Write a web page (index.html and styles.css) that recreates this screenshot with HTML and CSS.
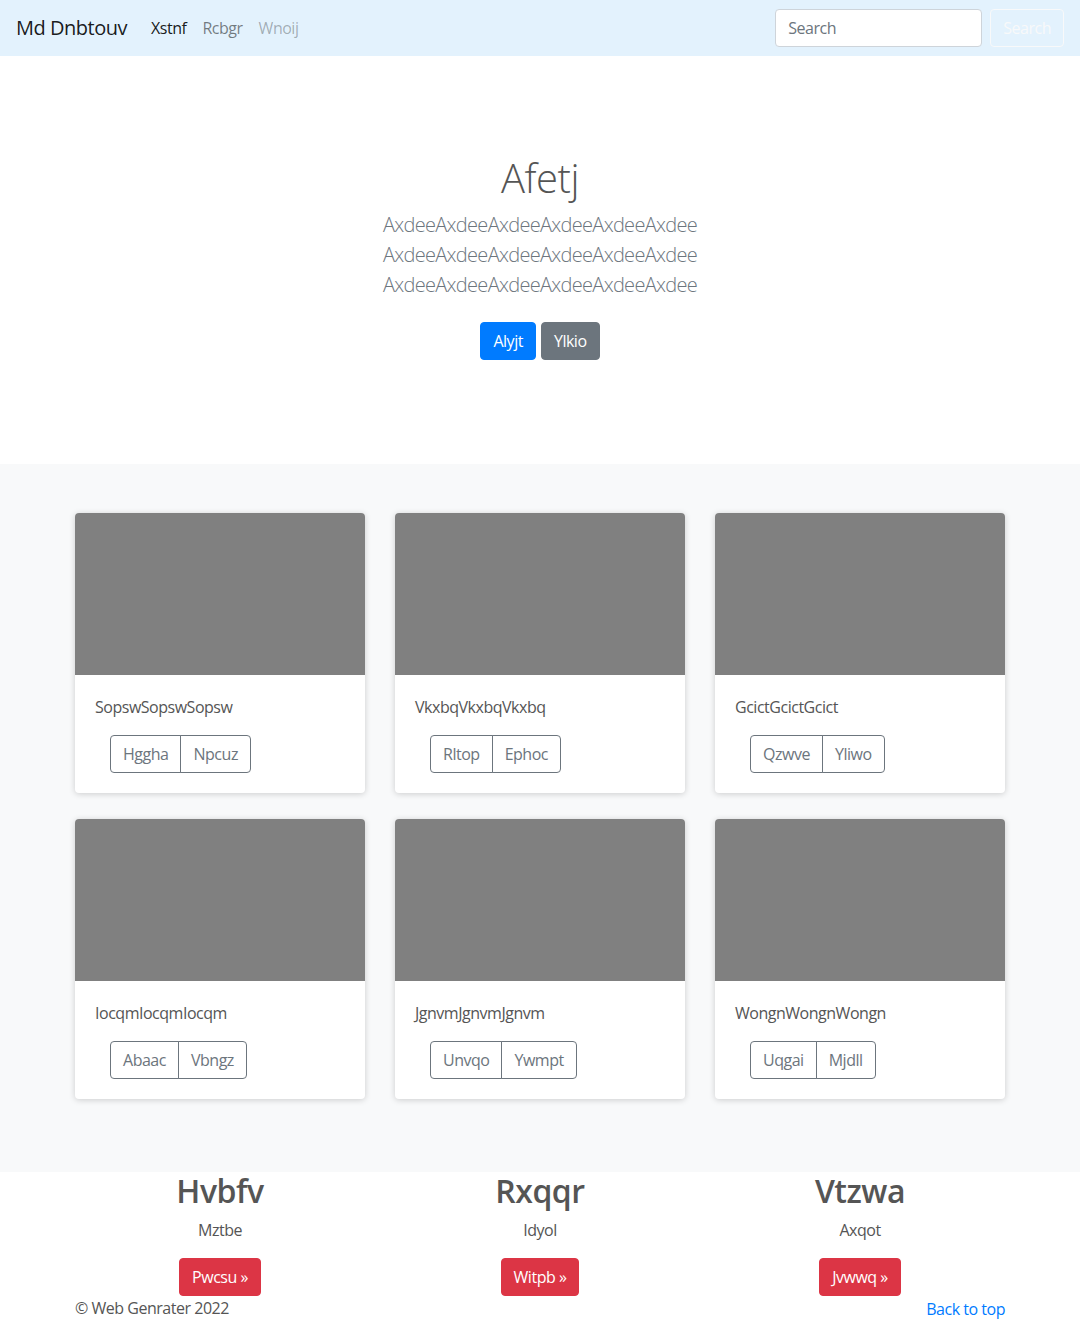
FILE: index.html
```html
<!DOCTYPE html>
<html lang="en">
<head>
<meta charset="utf-8">
<title>Md Dnbtouv</title>
<link rel="stylesheet" href="styles.css">
</head>
<body>
<nav class="navbar">
  <a class="brand" href="#">Md Dnbtouv</a>
  <ul class="nav-links">
    <li><a class="nav-link active" href="#">Xstnf</a></li>
    <li><a class="nav-link" href="#">Rcbgr</a></li>
    <li><a class="nav-link disabled" href="#">Wnoij</a></li>
  </ul>
  <form class="search">
    <input class="search-input" type="text" placeholder="Search">
    <button class="search-btn" type="button">Search</button>
  </form>
</nav>

<section class="hero">
  <div class="hero-inner">
    <h1 class="hero-title">Afetj</h1>
    <p class="lead">AxdeeAxdeeAxdeeAxdeeAxdeeAxdee AxdeeAxdeeAxdeeAxdeeAxdeeAxdee AxdeeAxdeeAxdeeAxdeeAxdeeAxdee</p>
    <p class="hero-actions">
      <a class="btn btn-primary" href="#">Alyjt</a>
      <a class="btn btn-secondary" href="#">Ylkio</a>
    </p>
  </div>
</section>

<section class="album">
  <div class="container">
    <div class="grid">
      <div class="card">
        <div class="thumb"></div>
        <div class="card-body">
          <p class="card-text">SopswSopswSopsw</p>
          <div class="btn-group"><button class="btn btn-outline">Hggha</button><button class="btn btn-outline">Npcuz</button></div>
        </div>
      </div>
      <div class="card">
        <div class="thumb"></div>
        <div class="card-body">
          <p class="card-text">VkxbqVkxbqVkxbq</p>
          <div class="btn-group"><button class="btn btn-outline">Rltop</button><button class="btn btn-outline">Ephoc</button></div>
        </div>
      </div>
      <div class="card">
        <div class="thumb"></div>
        <div class="card-body">
          <p class="card-text">GcictGcictGcict</p>
          <div class="btn-group"><button class="btn btn-outline">Qzwve</button><button class="btn btn-outline">Yliwo</button></div>
        </div>
      </div>
      <div class="card">
        <div class="thumb"></div>
        <div class="card-body">
          <p class="card-text">IocqmIocqmIocqm</p>
          <div class="btn-group"><button class="btn btn-outline">Abaac</button><button class="btn btn-outline">Vbngz</button></div>
        </div>
      </div>
      <div class="card">
        <div class="thumb"></div>
        <div class="card-body">
          <p class="card-text">JgnvmJgnvmJgnvm</p>
          <div class="btn-group"><button class="btn btn-outline">Unvqo</button><button class="btn btn-outline">Ywmpt</button></div>
        </div>
      </div>
      <div class="card">
        <div class="thumb"></div>
        <div class="card-body">
          <p class="card-text">WongnWongnWongn</p>
          <div class="btn-group"><button class="btn btn-outline">Uqgai</button><button class="btn btn-outline">Mjdll</button></div>
        </div>
      </div>
    </div>
  </div>
</section>

<section class="features">
  <div class="container features-row">
    <div class="feature">
      <h2 class="feature-title">Hvbfv</h2>
      <p class="feature-text">Mztbe</p>
      <a class="btn btn-danger" href="#">Pwcsu &raquo;</a>
    </div>
    <div class="feature">
      <h2 class="feature-title">Rxqqr</h2>
      <p class="feature-text">Idyol</p>
      <a class="btn btn-danger" href="#">Witpb &raquo;</a>
    </div>
    <div class="feature">
      <h2 class="feature-title">Vtzwa</h2>
      <p class="feature-text">Axqot</p>
      <a class="btn btn-danger" href="#">Jvwwq &raquo;</a>
    </div>
  </div>
</section>

<footer class="footer">
  <div class="container footer-row">
    <p class="copy">&copy; Web Genrater 2022</p>
    <a class="back" href="#">Back to top</a>
  </div>
</footer>
</body>
</html>
```

FILE: styles.css
```css
* { box-sizing: border-box; }
html, body { margin: 0; padding: 0; }
body {
  font-family: "Open Sans", "Noto Sans", "Liberation Sans", sans-serif;
  font-size: 16px;
  line-height: 1.5;
  letter-spacing: -0.03em;
  color: #555;
  background: #fff;
}
a { text-decoration: none; }
p { margin: 0; }

.navbar {
  height: 56px;
  background: #e3f2fd;
  display: flex;
  align-items: center;
  padding: 0 16px;
}
.brand {
  font-size: 20px;
  color: rgba(0,0,0,.9);
  margin-right: 16px;
  line-height: 30px;
}
.nav-links {
  display: flex;
  list-style: none;
  margin: 0;
  padding: 0;
  flex: 1;
}
.nav-link {
  display: block;
  padding: 8px;
  color: rgba(0,0,0,.5);
  font-size: 16px;
}
.nav-link.active { color: rgba(0,0,0,.9); }
.nav-link.disabled { color: rgba(0,0,0,.3); }
.search { display: flex; align-items: center; }
.search-input {
  width: 207px;
  height: 38px;
  padding: 6px 12px;
  border: 1px solid #ced4da;
  border-radius: 4px;
  font: inherit;
  letter-spacing: inherit;
  color: #495057;
  margin-right: 8px;
  background: #fff;
}
.search-input::placeholder { color: #6c757d; }
.search-btn {
  height: 38px;
  padding: 6px 12px;
  border: 1px solid #f8f9fa;
  border-radius: 4px;
  background: transparent;
  color: #f8f9fa;
  font: inherit;
  letter-spacing: inherit;
}

.hero {
  padding: 98px 0 104px;
  display: flex;
  justify-content: center;
  text-align: center;
}
.hero-inner { width: 450px; }
.hero-title {
  font-size: 40px;
  font-weight: 300;
  line-height: 1.2;
  margin: 0 0 8px;
  color: #555;
}
.lead {
  font-size: 20px;
  font-weight: 300;
  line-height: 30px;
  letter-spacing: -0.035em;
  color: #6c757d;
  margin-bottom: 22px;
}
.hero-actions { display: flex; justify-content: center; gap: 5px; }

.btn {
  display: inline-block;
  height: 38px;
  padding: 6px 12px;
  font: inherit;
  font-size: 16px;
  line-height: 24px;
  letter-spacing: inherit;
  border: 1px solid transparent;
  border-radius: 4px;
  cursor: pointer;
}
.btn-primary { background: #007bff; border-color: #007bff; color: #fff; }
.btn-secondary { background: #6c757d; border-color: #6c757d; color: #fff; }
.btn-danger { background: #dc3545; border-color: #dc3545; color: #fff; }

.album {
  background: #f8f9fa;
  padding: 48px 0 49px;
}
.container {
  width: 960px;
  margin: 0 auto;
  padding: 0 15px;
}
.grid {
  display: grid;
  grid-template-columns: repeat(3, 290px);
  column-gap: 30px;
  row-gap: 25px;
  padding-bottom: 24px;
}
.card {
  background: #fff;
  border-radius: 4px;
  overflow: hidden;
  box-shadow: 0 1px 6px rgba(0,0,0,.18);
  margin-top: 1px;
}
.thumb { height: 162px; background: #808080; }
.card-body { padding: 20px; }
.card-text { margin-bottom: 16px; color: #555; line-height: 24px; }
.btn-group { display: inline-flex; margin-left: 15px; }
.btn-outline {
  background: transparent;
  border-color: #6c757d;
  color: #6c757d;
}
.btn-group .btn-outline:first-child { border-radius: 4px 0 0 4px; }
.btn-group .btn-outline:last-child { border-radius: 0 4px 4px 0; margin-left: -1px; }

.container.features-row {
  display: grid;
  grid-template-columns: repeat(3, 1fr);
  padding: 0;
  text-align: center;
}
.feature-title {
  font-size: 32px;
  font-weight: 600;
  line-height: 1.2;
  margin: 0 0 8px;
  color: #555;
}
.feature-text { margin-bottom: 16px; }

.footer-row {
  display: flex;
  justify-content: space-between;
}
.copy { color: #555; }
.back { color: #007bff; margin-top: 1px; }
```
